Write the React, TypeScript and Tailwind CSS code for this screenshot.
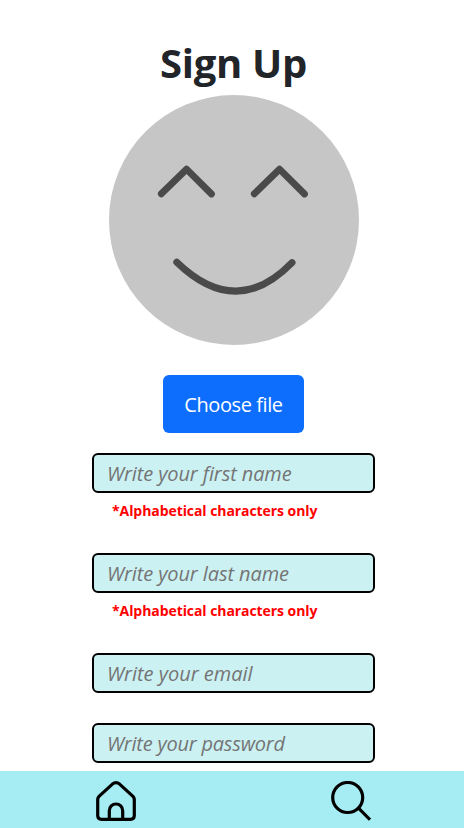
type FieldProps = {
  placeholder: string;
  type?: string;
  hint?: string;
  spacing: string;
};

function Field({ placeholder, type = "text", hint, spacing }: FieldProps) {
  return (
    <div className="w-[283px]">
      <input
        type={type}
        placeholder={placeholder}
        className={`block h-10 w-full rounded-md border-2 border-black bg-[#cbf1f3] px-[13px] pt-px text-[20px] italic placeholder:text-[#757575] outline-none ${spacing}`}
      />
      {hint && (
        <p className="mt-1.5 h-6 pl-5 text-[14px] leading-[23px] font-bold tracking-[-0.07px] whitespace-nowrap text-[#ff0000]">
          {hint}
        </p>
      )}
    </div>
  );
}

function Avatar() {
  return (
    <div className="ml-px size-[250px] shrink-0 rounded-full bg-[#c6c6c6]">
      <svg viewBox="0 0 250 250" className="size-full" fill="none" stroke="#4a4a4a" strokeLinecap="round">
        <path d="M52.3 98.8 77.5 74.2 102.5 99" strokeWidth="6.8" strokeLinejoin="round" />
        <path d="M145.3 98.8 170.5 74.2 195.5 99" strokeWidth="6.8" strokeLinejoin="round" />
        <path d="M67.8 167.2Q127.5 224.8 183 167.6" strokeWidth="7" />
      </svg>
    </div>
  );
}

export default function App() {
  return (
    <div className="flex h-[828px] flex-col overflow-hidden bg-white font-['Open_Sans','Noto_Sans',sans-serif]">
      <main className="flex min-h-0 flex-1 flex-col items-center pt-[39px] pl-[3px]">
        <h1 className="mb-2 h-12 text-[40px] leading-[48px] font-bold tracking-[-0.3px] whitespace-nowrap text-[#212529]">
          Sign Up
        </h1>
        <Avatar />
        <button className="mt-[30px] h-[58px] w-[141px] shrink-0 rounded-md bg-[#0d6efd] pt-0.5 text-[20px] tracking-[-0.42px] whitespace-nowrap text-white">
          Choose file
        </button>
        <form className="mt-5 flex flex-col gap-[30px]">
          <Field placeholder="Write your first name" hint="*Alphabetical characters only" spacing="tracking-[-0.1px]" />
          <Field placeholder="Write your last name" hint="*Alphabetical characters only" spacing="tracking-[-0.1px]" />
          <Field placeholder="Write your email" type="email" spacing="tracking-[0px]" />
          <Field placeholder="Write your password" type="password" spacing="tracking-[-0.22px]" />
        </form>
      </main>
      <nav className="flex h-[57px] shrink-0 items-start justify-between bg-[#a5ecf3] pt-[10px] pr-[93px] pl-24">
        <svg viewBox="0 0 40 40" className="size-10" fill="none" stroke="black" strokeWidth="3.2" strokeLinejoin="round">
          <path d="M1.7 18.6Q1.7 16.7 3 15.4L16.4 3.1Q20 .2 23.6 3.1L37 15.4Q38.3 16.7 38.3 18.6V34.6Q38.3 38.4 34.5 38.4H5.5Q1.7 38.4 1.7 34.6Z" />
          <path d="M13.3 38V29.7A6.7 6.7 0 0 1 26.7 29.7V38" />
        </svg>
        <svg viewBox="0 0 40 40" className="size-10" fill="none" stroke="black" strokeWidth="3.2">
          <circle cx="16.7" cy="16.5" r="15" />
          <path d="M27.5 27.2 39 38.7" />
        </svg>
      </nav>
    </div>
  );
}
